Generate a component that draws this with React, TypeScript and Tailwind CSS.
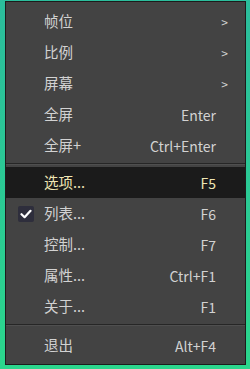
import React from "react";

type Item = { label: string; shortcut?: string; sub?: boolean; checked?: boolean; active?: boolean };

const group1: Item[] = [
  { label: "帧位", sub: true },
  { label: "比例", sub: true },
  { label: "屏幕", sub: true },
  { label: "全屏", shortcut: "Enter" },
  { label: "全屏+", shortcut: "Ctrl+Enter" },
];
const group2: Item[] = [
  { label: "选项...", shortcut: "F5", active: true },
  { label: "列表...", shortcut: "F6", checked: true },
  { label: "控制...", shortcut: "F7" },
  { label: "属性...", shortcut: "Ctrl+F1" },
  { label: "关于...", shortcut: "F1" },
];
const group3: Item[] = [{ label: "退出", shortcut: "Alt+F4" }];

function Row({ item }: { item: Item }) {
  return (
    <div
      className={
        "flex h-[31px] items-center " +
        (item.active ? "bg-[#1b1b1b] text-[#efe6b4]" : "text-[#d2d2d2]")
      }
    >
      <div className="flex w-[38px] shrink-0 items-center justify-center pl-[1px]">
        {item.checked && (
          <div className="flex h-[16px] w-[16px] items-center justify-center rounded-[2px] bg-[#2e2e3c]">
            <svg width="12" height="10" viewBox="0 0 12 10">
              <path d="M1.5 5.2 L4.6 8.2 L10.5 1.8" fill="none" stroke="#ffffff" strokeWidth="2.2" strokeLinecap="round" strokeLinejoin="round" />
            </svg>
          </div>
        )}
      </div>
      <div className="flex-1 text-[14.5px] leading-none">{item.label}</div>
      <div className="text-[14px] leading-none">{item.shortcut}</div>
      <div className="flex w-[29px] shrink-0 items-center justify-end pr-[17px] text-[12px] leading-none">
        {item.sub ? ">" : ""}
      </div>
    </div>
  );
}

function Sep() {
  return (
    <div className="flex h-[6px] flex-col justify-center">
      <div className="h-px bg-[#262626]" />
      <div className="h-px bg-[#4f4f4f]" />
    </div>
  );
}

export default function App() {
  return (
    <div
      className="flex h-[369px] w-[250px] bg-gradient-to-b from-[#2bbd9c] to-[#2bd68c] pb-[4px] pl-[5px] pr-[4px] pt-[1px]"
      style={{ fontFamily: '"Noto Sans CJK SC", "Noto Sans", sans-serif' }}
    >
      <div className="flex flex-1 flex-col border border-[#1c1c1c] bg-[#434343] pt-[4px]">
        {group1.map((i) => (
          <Row key={i.label} item={i} />
        ))}
        <Sep />
        {group2.map((i) => (
          <Row key={i.label} item={i} />
        ))}
        <Sep />
        <div className="h-[2px]" />
        {group3.map((i) => (
          <Row key={i.label} item={i} />
        ))}
      </div>
    </div>
  );
}
